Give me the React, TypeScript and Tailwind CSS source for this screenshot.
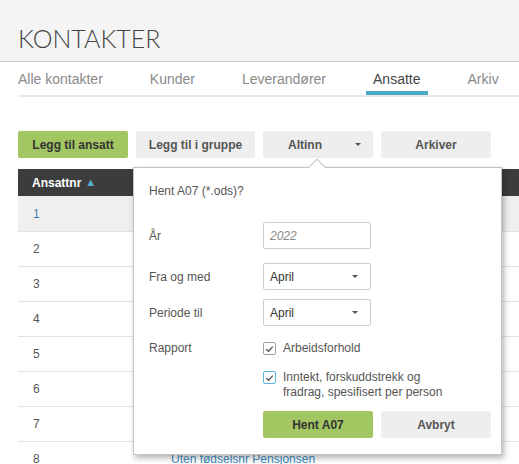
import { ReactNode } from 'react'

const tabs = ['Alle kontakter', 'Kunder', 'Leverandører', 'Ansatte', 'Arkiv']

function Caret() {
    return <span className="inline-block w-0 h-0 border-x-[3px] border-x-transparent border-t-[3px] border-t-[#555]" />
}

function Check({ blue }: { blue?: boolean }) {
    return (
        <span className={`flex items-center justify-center w-[13px] h-[13px] shrink-0 rounded-[2px] border bg-white ${blue ? 'border-[#5ab4da]' : 'border-[#a0a0a0]'}`}>
            <svg width="9" height="8" viewBox="0 0 9 8">
                <polyline points="1.3,4.2 3.5,6.3 7.8,1.6" fill="none" stroke="#555" strokeWidth="1.3" />
            </svg>
        </span>
    )
}

function Row({ label, children, className = '' }: { label: string; children: ReactNode; className?: string }) {
    return (
        <div className={`flex items-center ${className}`}>
            <div className="w-[114px] shrink-0 text-[#555]">{label}</div>
            {children}
        </div>
    )
}

function Select({ value }: { value: string }) {
    return (
        <div className="flex items-center justify-between w-[108px] h-[27px] pl-[6px] pr-[12px] border border-[#ccc] rounded-[2px] text-[#333]">
            <span>{value}</span>
            <Caret />
        </div>
    )
}

export default function App() {
    const rows = [1, 2, 3, 4, 5, 6, 7, 8]

    return (
        <div className="relative h-screen overflow-hidden bg-white text-[12px] font-['Liberation_Sans',Arial,sans-serif]">
            {/* header */}
            <div className="h-[62px] bg-[#f4f4f4] border-b border-[#c8c8c8] pl-[18px] pt-[22px]">
                <h1 className="font-['Lato',sans-serif] font-light text-[25px] leading-[32px] text-[#444]">KONTAKTER</h1>
            </div>

            <div className="pl-[18px]">
                {/* tabs */}
                <div className="border-b-2 border-[#e8e8e8]">
                    <div className="flex gap-[33px] -ml-[7px] text-[14px] leading-[17px]">
                        {tabs.map(t => (
                            <div
                                key={t}
                                className={`px-[7px] pt-[9px] pb-[3px] border-b-4 ${t === 'Ansatte' ? 'border-[#4aa8c8] text-[#444]' : 'border-transparent text-[#8a8a8a]'}`}
                            >
                                {t}
                            </div>
                        ))}
                    </div>
                </div>

                {/* actions */}
                <div className="flex gap-[8px] mt-[34px] font-bold">
                    <button className="w-[110px] h-[27px] rounded-[2px] bg-[#a2c662] text-[#333]">Legg til ansatt</button>
                    <button className="w-[119px] h-[27px] rounded-[2px] bg-[#eeeeee] text-[#555]">Legg til i gruppe</button>
                    <button className="flex items-center justify-between w-[110px] h-[27px] pl-[25px] pr-[12px] rounded-[2px] bg-[#eeeeee] text-[#555]">
                        <span>Altinn</span>
                        <Caret />
                    </button>
                    <button className="w-[110px] h-[27px] rounded-[2px] bg-[#eeeeee] text-[#555]">Arkiver</button>
                </div>

                {/* table */}
                <div className="mt-[11px]">
                    <div className="flex items-center h-[27px] bg-[#3c3c3c] pl-[14px] text-white font-bold">
                        Ansattnr <span className="ml-[4px] text-[11px] leading-none text-[#4fb0d3]">▲</span>
                    </div>
                    {rows.map(n => (
                        <div
                            key={n}
                            className={`flex items-center h-[35px] ${n === 1 ? 'bg-[#efefef]' : 'border-t border-[#e2e2e2]'}`}
                        >
                            <div className={`w-[153px] pl-[15px] ${n === 1 ? 'text-[#3d7fae]' : 'text-[#555]'}`}>{n}</div>
                            {n === 8 && <div className="text-[#3d8cc4]">Uten fødselsnr Pensjonsen</div>}
                        </div>
                    ))}
                </div>
            </div>

            {/* popover */}
            <div className="absolute left-[133px] top-[167px] w-[369px] h-[288px] bg-white border border-[#c4c4c4] shadow-[2px_3px_6px_rgba(0,0,0,0.3)] pl-[15px] pr-[10px] pt-[15px]">
                <span className="absolute left-[177px] -top-[7px] w-[12px] h-[12px] bg-white border-l border-t border-[#c4c4c4] rotate-45" />
                <div className="leading-[16px] text-[#555]">Hent A07 (*.ods)?</div>

                <Row label="År" className="mt-[23px]">
                    <div className="flex items-center w-[108px] h-[27px] pl-[6px] border border-[#ccc] rounded-[2px] italic text-[#888]">2022</div>
                </Row>
                <Row label="Fra og med" className="mt-[14px]">
                    <Select value="April" />
                </Row>
                <Row label="Periode til" className="mt-[9px]">
                    <Select value="April" />
                </Row>
                <Row label="Rapport" className="mt-[15px] leading-[15px]">
                    <Check />
                    <span className="ml-[7px] text-[#555]">Arbeidsforhold</span>
                </Row>
                <div className="flex mt-[14px] pl-[114px] leading-[15px]">
                    <div className="pt-[1px]"><Check blue /></div>
                    <span className="ml-[7px] text-[#555]">Inntekt, forskuddstrekk og<br />fradrag, spesifisert per person</span>
                </div>
                <div className="flex gap-[8px] mt-[11px] pl-[114px] font-bold">
                    <button className="w-[110px] h-[27px] rounded-[2px] bg-[#a2c662] text-[#333]">Hent A07</button>
                    <button className="w-[110px] h-[27px] rounded-[2px] bg-[#eeeeee] text-[#555]">Avbryt</button>
                </div>
            </div>
        </div>
    )
}
